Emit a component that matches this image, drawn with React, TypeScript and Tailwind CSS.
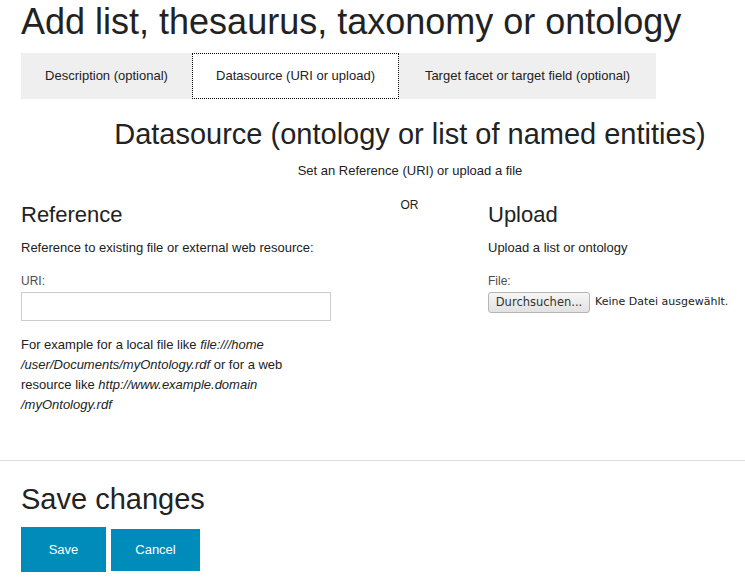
import React from 'react';

const sans = "font-['Liberation_Sans',Arial,sans-serif]";

function Tabs() {
  return (
    <div className="flex h-[46px] ml-[21px] text-[13px]">
      <div className="w-[171px] bg-[#efefef] flex items-center justify-center">Description (optional)</div>
      <div className="w-[207px] bg-white border border-dotted border-black flex items-center justify-center">
        Datasource (URI or upload)
      </div>
      <div className="w-[257px] bg-[#efefef] flex items-center justify-center">
        Target facet or target field (optional)
      </div>
    </div>
  );
}

export default function App() {
  return (
    <div className={`${sans} w-[745px] h-[585px] overflow-hidden bg-white text-[#222]`}>
      <h1 className="text-[36px] leading-[36px] pt-[4px] mb-[13px] pl-[21px]">
        Add list, thesaurus, taxonomy or ontology
      </h1>
      <Tabs />

      {/* datasource panel, a bit wider than the window */}
      <div className="w-[820px]">
        <h2 className="mt-[20px] text-[29px] leading-[30px] text-center">
          Datasource (ontology or list of named entities)
        </h2>
        <p className="mt-[12px] text-[13px] leading-[20px] text-center">Set an Reference (URI) or upload a file</p>

        <div className="mt-[15px] flex pl-[21px]">
          <div className="w-[310px]">
            <h3 className="mt-[6px] text-[22px] leading-[26px]">Reference</h3>
            <p className="mt-[10px] text-[13px] leading-[20px]">Reference to existing file or external web resource:</p>
            <label className="block mt-[15px] text-[12px] leading-[16px] text-[#4d4d4d]">URI:</label>
            <input
              type="text"
              className="block mt-[3px] w-[310px] h-[29px] border border-[#ccc] bg-white outline-none"
            />
            <p className="mt-[14px] text-[13px] leading-[20px]">
              For example for a local file like <i>file:///home</i>
              <br />
              <i>/user/Documents/myOntology.rdf</i> or for a web
              <br />
              resource like <i>http://www.example.domain</i>
              <br />
              <i>/myOntology.rdf</i>
            </p>
          </div>

          <div className="w-[157px] text-center text-[12px] leading-[16px] pt-[1px]">OR</div>

          <div className="flex-1">
            <h3 className="mt-[6px] text-[22px] leading-[26px]">Upload</h3>
            <p className="mt-[10px] text-[13px] leading-[20px]">Upload a list or ontology</p>
            <label className="block mt-[15px] text-[12px] leading-[16px] text-[#4d4d4d]">File:</label>
            <div className="mt-[3px] flex items-center gap-[5px] font-['DejaVu_Sans',sans-serif] text-[11px] text-[#222]">
              <button className="h-[21px] w-[102px] rounded-[3px] border border-[#b5b5b5] bg-gradient-to-b from-[#f6f6f6] to-[#e2e2e2] text-[#333] text-[11.5px]">
                Durchsuchen...
              </button>
              <span>Keine Datei ausgewählt.</span>
            </div>
          </div>
        </div>
      </div>

      <div className="mt-[45px] border-t border-[#ddd]" />

      <h2 className="mt-[23px] pl-[21px] text-[29px] leading-[30px]">Save changes</h2>
      <div className="mt-[13px] pl-[21px] flex items-center gap-[5px] text-[13px] text-white">
        <button className="w-[85px] h-[45px] bg-[#008cba]">Save</button>
        <button className="w-[89px] h-[42px] bg-[#008cba]">Cancel</button>
      </div>
    </div>
  );
}
